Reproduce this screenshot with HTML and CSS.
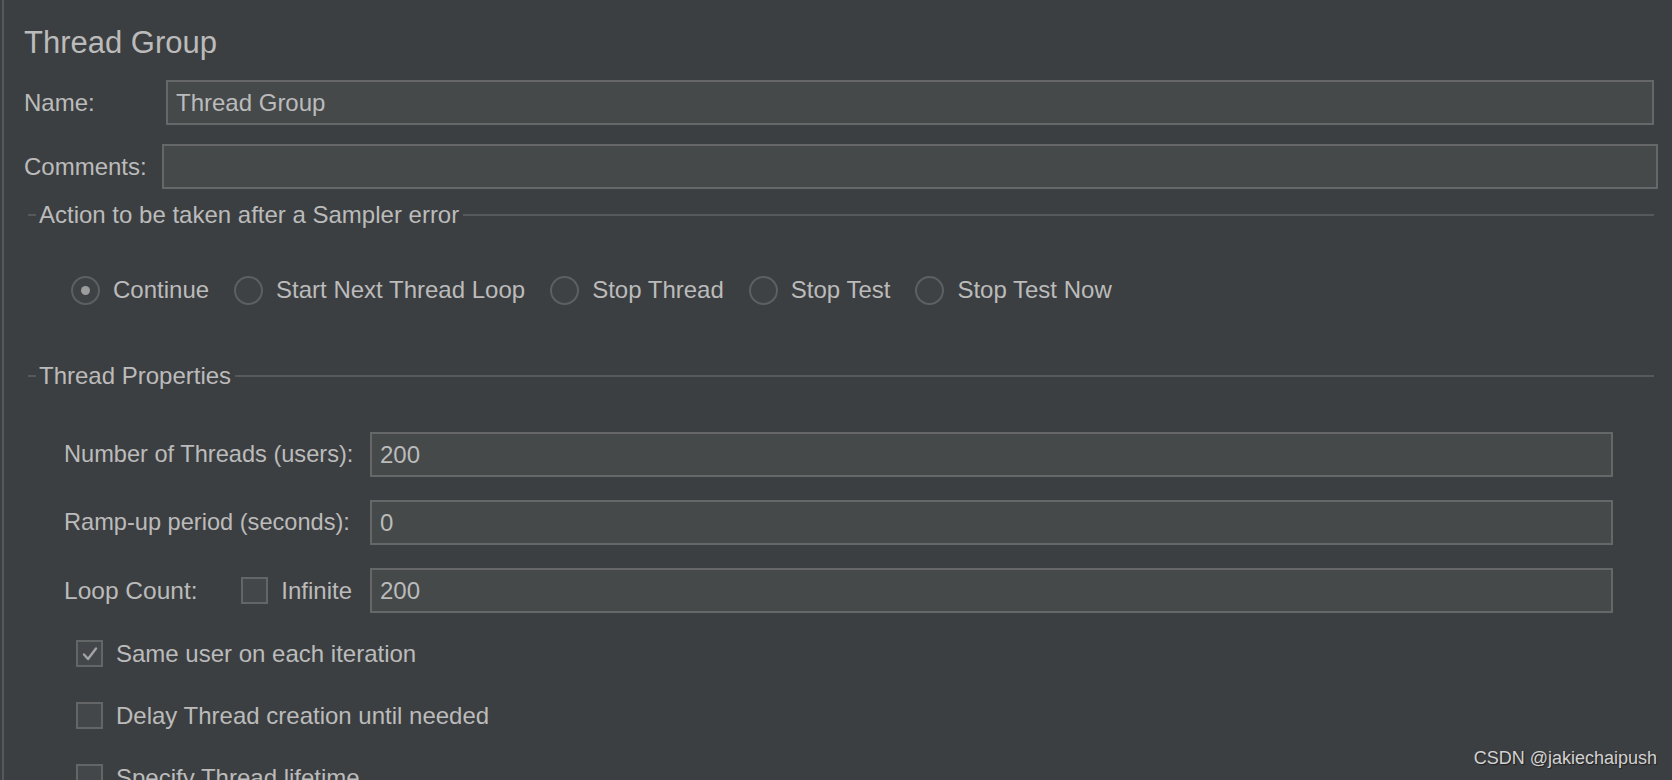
FILE: index.html
```html
<!DOCTYPE html>
<html lang="en">
<head>
    <meta charset="UTF-8">
    <meta name="viewport" content="width=device-width, initial-scale=1.0">
    <title>Thread Group</title>
    <link rel="stylesheet" href="styles.css">
</head>
<body>

    <div class="panel">
        <h1 class="title">Thread Group</h1>

        <div class="field name-row">
            <label>Name:</label>
            <div class="text-box">Thread Group</div>
        </div>

        <div class="field comments-row">
            <label>Comments:</label>
            <div class="text-box"></div>
        </div>

        <!-- Sampler error action -->
        <div class="group-title action-title">
            <span class="dash"></span>
            <span class="group-text">Action to be taken after a Sampler error</span>
            <span class="rule"></span>
        </div>

        <div class="radio-row">
            <div class="radio-item">
                <span class="radio checked"></span>
                <span>Continue</span>
            </div>
            <div class="radio-item">
                <span class="radio"></span>
                <span>Start Next Thread Loop</span>
            </div>
            <div class="radio-item">
                <span class="radio"></span>
                <span>Stop Thread</span>
            </div>
            <div class="radio-item">
                <span class="radio"></span>
                <span>Stop Test</span>
            </div>
            <div class="radio-item">
                <span class="radio"></span>
                <span>Stop Test Now</span>
            </div>
        </div>

        <!-- Thread properties -->
        <div class="group-title props-title">
            <span class="dash"></span>
            <span class="group-text">Thread Properties</span>
            <span class="rule"></span>
        </div>

        <div class="props">
            <div class="prop-row">
                <label>Number of Threads (users):</label>
                <div class="text-box">200</div>
            </div>
            <div class="prop-row">
                <label>Ramp-up period (seconds):</label>
                <div class="text-box">0</div>
            </div>
            <div class="prop-row">
                <div class="loop-label">
                    <span class="loop-name">Loop Count:</span>
                    <span class="checkbox"></span>
                    <span>Infinite</span>
                </div>
                <div class="text-box">200</div>
            </div>
        </div>

        <div class="check-list">
            <div class="check-item">
                <span class="checkbox">
                    <svg width="18" height="16" viewBox="0 0 18 16">
                        <path d="M3 8.5 L7 13 L15 2.5" fill="none" stroke="#a3a3a3" stroke-width="2.4" stroke-linecap="round" stroke-linejoin="round"/>
                    </svg>
                </span>
                <span>Same user on each iteration</span>
            </div>
            <div class="check-item">
                <span class="checkbox"></span>
                <span>Delay Thread creation until needed</span>
            </div>
            <div class="check-item">
                <span class="checkbox"></span>
                <span>Specify Thread lifetime</span>
            </div>
        </div>
    </div>

    <div class="watermark">CSDN @jakiechaipush</div>

</body>
</html>
```

FILE: styles.css
```css
html, body {
    height: 780px;
    overflow: hidden;
}

body {
    margin: 0;
    background-color: #3c3f41;
    color: #bbbbbb;
    font-family: "Liberation Sans", Arial, sans-serif;
    font-size: 24px;
}

.panel {
    margin-left: 2px;
    border-left: 2px solid #56595b;
    padding: 26px 0 0 20px;
    height: 1000px;
}

.title {
    margin: 0;
    font-size: 31px;
    font-weight: normal;
    line-height: 34px;
}

.field {
    display: grid;
    align-items: center;
}

.name-row {
    grid-template-columns: 142px 1fr;
    margin: 20px 18px 0 0;
}

.comments-row {
    grid-template-columns: 138px 1fr;
    margin: 19px 14px 0 0;
}

.text-box {
    box-sizing: border-box;
    height: 45px;
    line-height: 41px;
    padding: 0 8px;
    background-color: #45494a;
    border: 2px solid #656768;
    white-space: nowrap;
}

.group-title {
    display: flex;
    align-items: center;
    height: 30px;
    margin-right: 18px;
}

.action-title {
    margin-top: 11px;
}

.props-title {
    margin-top: 56px;
}

.dash {
    width: 8px;
    height: 2px;
    margin-left: 4px;
    background-color: #56595b;
}

.group-text {
    padding: 0 4px 0 3px;
}

.rule {
    flex: 1;
    height: 2px;
    background-color: #56595b;
}

.radio-row {
    display: flex;
    align-items: center;
    gap: 25px;
    height: 30px;
    margin-top: 45px;
    padding-left: 47px;
}

.radio-item {
    display: flex;
    align-items: center;
    gap: 13px;
}

.radio {
    box-sizing: border-box;
    width: 29px;
    height: 29px;
    border: 2px solid #5d6062;
    border-radius: 50%;
    background-color: #3e4244;
    display: flex;
    align-items: center;
    justify-content: center;
}

.radio.checked::after {
    content: "";
    width: 9px;
    height: 9px;
    border-radius: 50%;
    background-color: #9c9c9c;
}

.props {
    display: flex;
    flex-direction: column;
    gap: 23px;
    margin: 41px 59px 0 40px;
}

.prop-row {
    display: grid;
    grid-template-columns: 288px 1fr;
    column-gap: 18px;
    align-items: center;
}

.prop-row label {
    white-space: nowrap;
    font-size: 23.6px;
}

.loop-label {
    display: flex;
    align-items: center;
    gap: 13px;
}

.loop-name {
    margin-right: auto;
    font-size: 24.5px;
}

.checkbox {
    box-sizing: border-box;
    width: 27px;
    height: 27px;
    border: 2px solid #636567;
    background-color: #43474a;
    display: flex;
    align-items: center;
    justify-content: center;
}

.check-list {
    display: flex;
    flex-direction: column;
    gap: 35px;
    margin-top: 27px;
    padding-left: 52px;
}

.check-item {
    display: flex;
    align-items: center;
    gap: 13px;
    height: 27px;
}

.watermark {
    position: absolute;
    right: 15px;
    top: 748px;
    font-size: 18px;
    color: #d2d2d2;
    text-shadow: 1px 1px 1px rgba(0, 0, 0, 0.5);
}
```
